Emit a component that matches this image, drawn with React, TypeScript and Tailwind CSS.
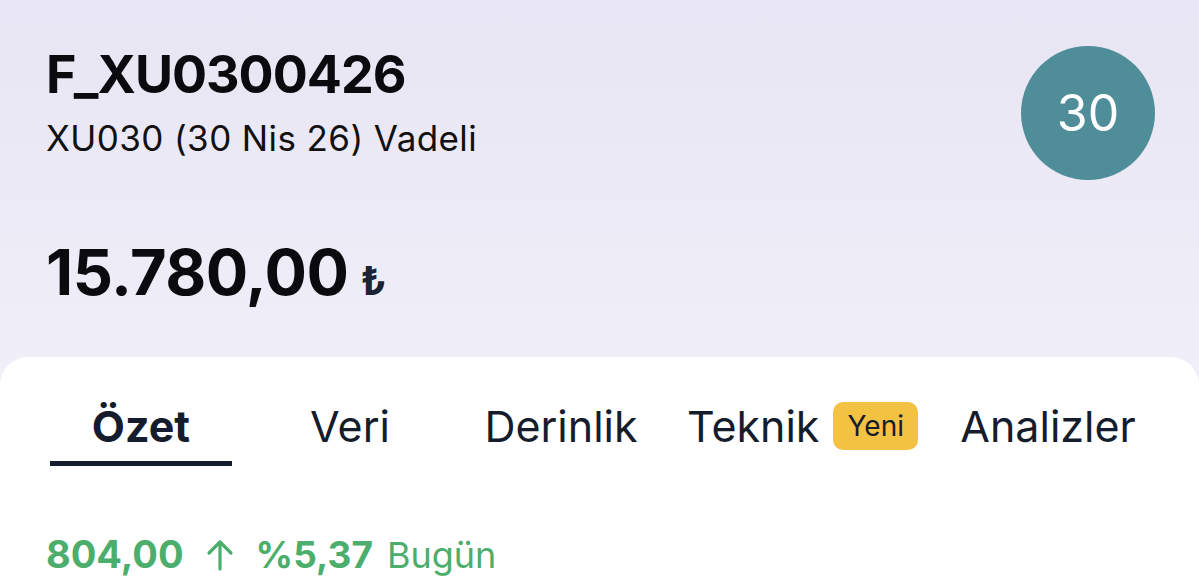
import React from 'react';

const tabs: { label: string; width: string; ml: string; active?: boolean; badge?: string }[] = [
    { label: 'Özet', width: 'w-[182px]', ml: 'ml-0', active: true },
    { label: 'Veri', width: 'w-[182px]', ml: 'ml-[27px]' },
    { label: 'Derinlik', width: 'w-[186px]', ml: 'ml-[27px]' },
    { label: 'Teknik', width: 'w-[265px]', ml: 'ml-[16px]', badge: 'Yeni' },
    { label: 'Analizler', width: 'w-[208px]', ml: 'ml-[9px]' },
];

export default function App() {
    return (
        <div
            className="w-[1199px] h-[583px] overflow-hidden bg-gradient-to-b from-[#e8e5f4] to-[#f5f4fa] flex flex-col text-[#0b0b0f]"
            style={{ fontFamily: 'Inter, "Noto Sans", sans-serif' }}
        >
            {/* header */}
            <div className="flex justify-between pl-[46px] pr-[44px] pt-[46px]">
                <div>
                    <h1 className="text-[52px] leading-[58px] font-bold tracking-[-1px]">F_XU0300426</h1>
                    <p className="text-[35px] leading-[40px] mt-[14px] text-[#111] tracking-[0.4px]">XU030 (30 Nis 26) Vadeli</p>
                </div>
                <div className="w-[134px] h-[134px] rounded-full bg-[#4f8e98] flex items-center justify-center text-white text-[50px]">
                    30
                </div>
            </div>

            {/* price */}
            <div className="pl-[46px] mt-[57px] flex items-baseline gap-[12px]">
                <span className="text-[63px] leading-[70px] font-bold tracking-[-0.5px]">15.780,00</span>
                <span className="text-[40px] font-bold text-[#1a2233]">₺</span>
            </div>

            {/* card */}
            <div className="mt-auto h-[226px] bg-white rounded-t-[28px] flex flex-col">
                <div className="flex pl-[50px] pt-[36px]">
                    {tabs.map((t) => (
                        <div key={t.label} className={`${t.width} ${t.ml} flex flex-col items-center`}>
                            <div className="h-[66px] flex items-center gap-[14px]">
                                <span className={`text-[43px] text-[#151c2c] ${t.active ? 'font-bold' : 'font-normal'}`}>{t.label}</span>
                                {t.badge && (
                                    <span className="bg-[#f4c243] rounded-[10px] px-[14px] h-[48px] flex items-center text-[28px] text-[#151c2c]">
                                        {t.badge}
                                    </span>
                                )}
                            </div>
                            <div className={`w-full h-[5px] mt-[2px] ${t.active ? 'bg-[#151c2c]' : 'bg-transparent'}`} />
                        </div>
                    ))}
                </div>
                <div className="pl-[46px] mt-[60px] flex items-center text-[#4cae6c] text-[36px]">
                    <span className="font-bold text-[38px]">804,00</span>
                    <svg className="ml-[22px]" width="28" height="32" viewBox="0 0 28 32" fill="none" stroke="currentColor" strokeWidth="3.2" strokeLinecap="round" strokeLinejoin="round">
                        <path d="M14 30V3" />
                        <path d="M3 14L14 3l11 11" />
                    </svg>
                    <span className="ml-[22px] font-bold text-[37px]">%5,37</span>
                    <span className="ml-[14px]">Bugün</span>
                </div>
            </div>
        </div>
    );
}
